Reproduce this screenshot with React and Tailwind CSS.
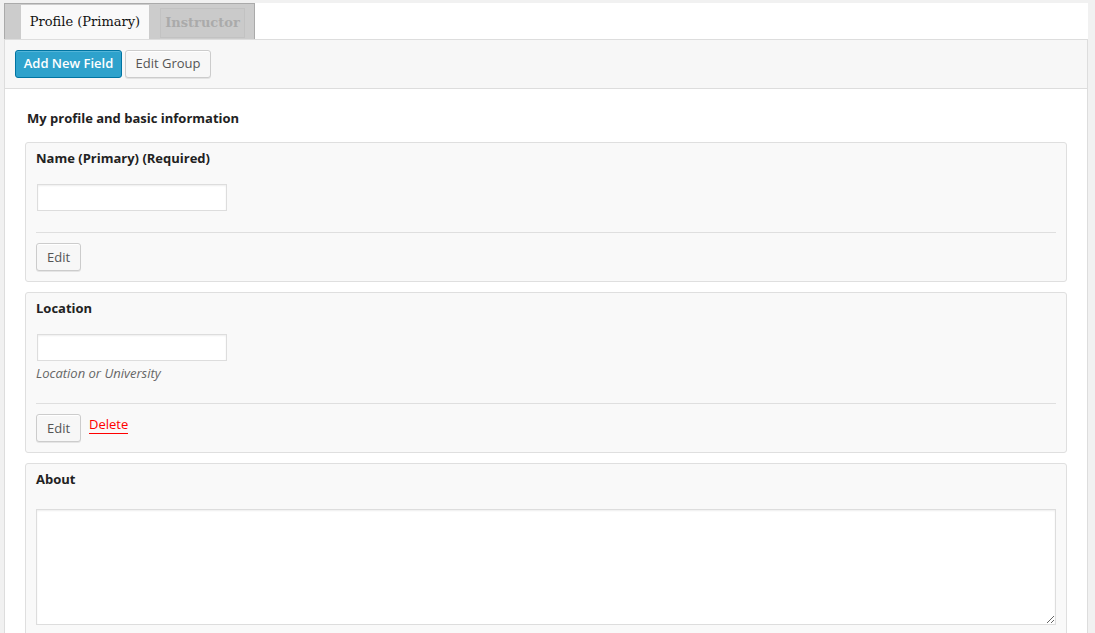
import React from "react";

const sans = { fontFamily: '"Open Sans", "Liberation Sans", sans-serif' };

const Separator = () => <div className="h-px bg-[#dfdfdf]" />;

const EditButton = () => (
  <button className="h-[28px] w-[45px] rounded-[3px] border border-[#cccccc] bg-[#f7f7f7] text-[13px] leading-none text-[#555] shadow-[inset_0_1px_0_#fff,0_1px_0_rgba(0,0,0,0.08)]">
    Edit
  </button>
);

const FieldCard = ({ title, children, footer }) => (
  <div className="rounded-[3px] border border-[#dfdfdf] bg-[#f9f9f9] px-[10px] pt-[5px] pb-[10px]">
    <h4 className="text-[13px] font-bold leading-[20px] text-[#222]">{title}</h4>
    {children}
    {footer}
  </div>
);

const Footer = ({ canDelete }) => (
  <>
    <div className="mt-[21px]">
      <Separator />
    </div>
    <div className="mt-[10px] flex items-start gap-[8px]">
      <EditButton />
      {canDelete && (
        <a className="mt-[1px] border-b border-[#ff0000] text-[13px] leading-[18px] text-[#ff0000]">Delete</a>
      )}
    </div>
  </>
);

const TextBox = () => (
  <input
    type="text"
    className="ml-px block h-[27px] w-[190px] border border-[#dddddd] bg-white shadow-[inset_0_1px_2px_rgba(0,0,0,0.07)] outline-none"
  />
);

export default function App() {
  return (
    <div className="min-h-screen bg-[#f1f1f1] pt-[3px] pl-[4px] pr-[7px]" style={sans}>
      <div className="bg-white">
        {/* tabs */}
        <div className="flex h-[36px]">
          <div
            className="flex h-[36px] w-[251px] items-end gap-[11px] border-x border-t border-[#aaaaaa] bg-[#cccccc] pl-[16px]"
            style={{ fontFamily: '"DejaVu Serif", "Liberation Serif", serif' }}
          >
            <div className="flex h-[34px] w-[128px] items-center justify-center bg-[#f9f9f9] text-[13px] text-[#111]">
              Profile (Primary)
            </div>
            <div className="mb-[1px] flex h-[30px] w-[85px] items-center justify-center border border-[#c2c2c2] bg-[#cacaca] text-[13px] font-bold text-[#aaaaaa]">
              Instructor
            </div>
          </div>
          <div className="flex-1" />
        </div>

        {/* panel */}
        <div className="border-x border-t border-[#dddddd]">
          <div className="flex h-[49px] items-start gap-[3px] border-b border-[#dddddd] bg-[#f7f7f7] px-[10px] pt-[10px]">
            <button className="h-[28px] w-[107px] rounded-[3px] border border-[#0074a2] bg-[#2ea2cc] text-[13px] font-semibold text-white shadow-[inset_0_1px_0_rgba(120,200,230,0.5)]">
              Add New Field
            </button>
            <button className="h-[28px] w-[86px] rounded-[3px] border border-[#cccccc] bg-[#f7f7f7] text-[13px] text-[#555] shadow-[inset_0_1px_0_#fff,0_1px_0_rgba(0,0,0,0.08)]">
              Edit Group
            </button>
          </div>

          <div className="px-[20px] pt-[19px] pb-[20px]">
            <h3 className="mb-[14px] pl-[2px] text-[13px] font-bold leading-[20px] text-[#222]">
              My profile and basic information
            </h3>

            <div className="flex flex-col gap-[10px]">
              <FieldCard title="Name (Primary) (Required)" footer={<Footer />}>
                <div className="mt-[16px]">
                  <TextBox />
                </div>
              </FieldCard>

              <FieldCard title="Location" footer={<Footer canDelete />}>
                <div className="mt-[16px]">
                  <TextBox />
                </div>
                <p className="mt-[3px] text-[13px] italic leading-[18px] text-[#666]">Location or University</p>
              </FieldCard>

              <FieldCard title="About">
                <textarea className="mt-[20px] block h-[116px] w-full border border-[#dddddd] bg-white shadow-[inset_0_1px_2px_rgba(0,0,0,0.07)] outline-none" />
                <div className="h-[40px]" />
              </FieldCard>
            </div>
          </div>
        </div>
      </div>
    </div>
  );
}
